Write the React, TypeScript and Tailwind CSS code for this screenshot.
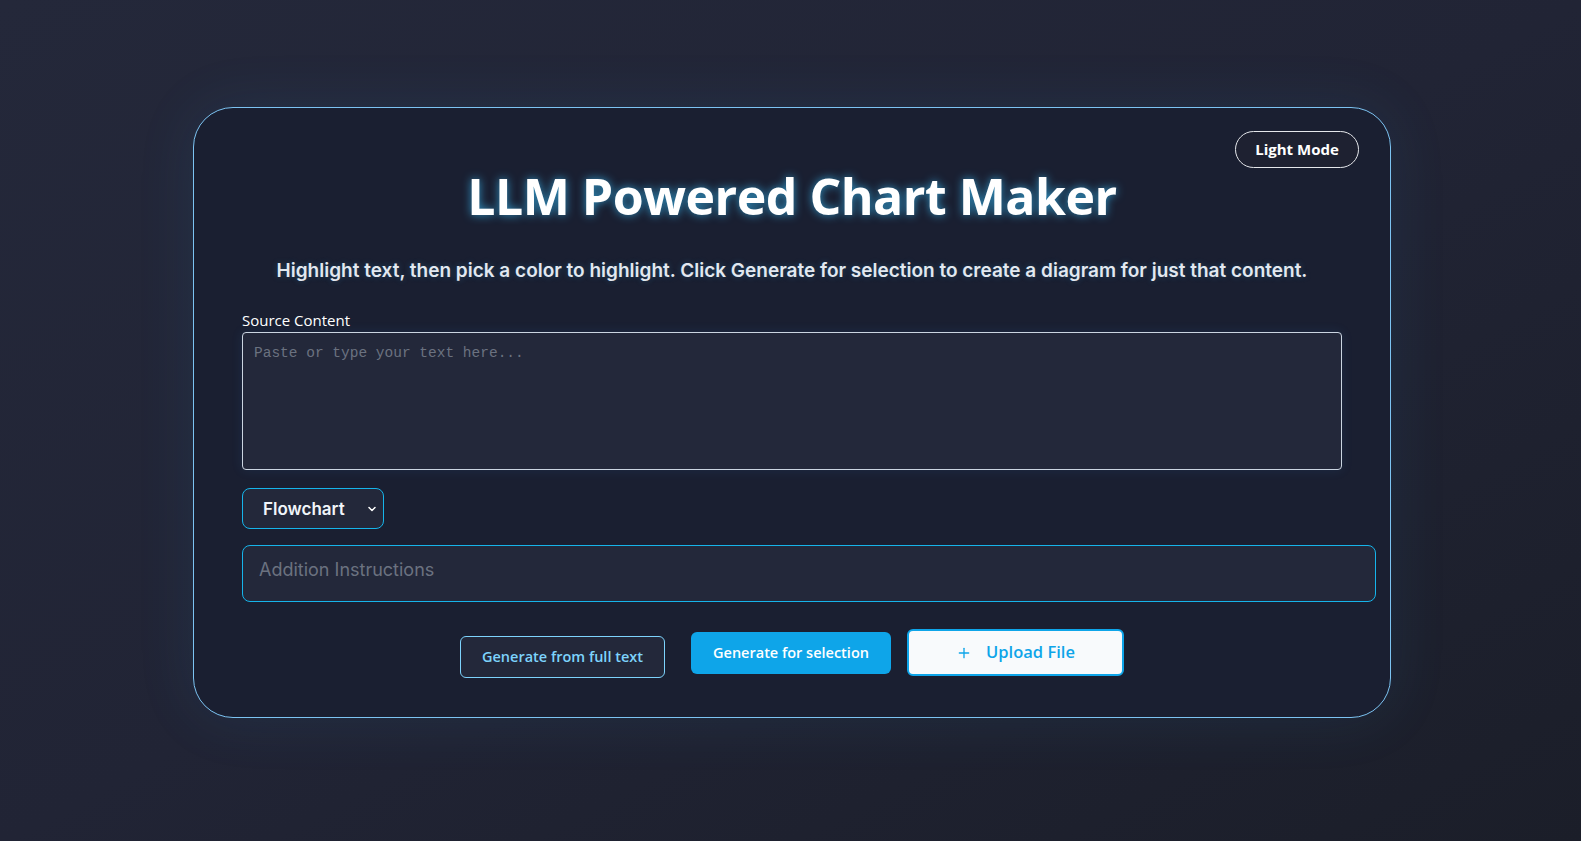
import { Plus, ChevronDown } from "lucide-react";

export default function App() {
  return (
    <main className="min-h-[841px] w-full bg-linear-to-br from-[#24283a] via-[#212435] to-[#1b1e29] pl-[3px] pt-[107px] pb-[124px]">
      {/* ================= CARD ================= */}
      <section className="relative mx-auto w-[1198px] rounded-[40px] border border-[#7cc3f2] bg-[#1a1f31] px-12 pt-[58px] pb-[41px] shadow-[0_0_60px_rgba(56,160,230,0.10)]">
        <button className="absolute right-[31px] top-[23px] flex h-[37px] w-[124px] items-center justify-center rounded-full border-[1.5px] border-[#e5e7eb] bg-[#1e2131] font-['Open_Sans',sans-serif] text-[15px] font-bold text-white">
          Light Mode
        </button>

        <h1 className="text-center font-['Open_Sans',sans-serif] text-[50px] font-bold leading-[1.2] tracking-[-0.5px] text-white [text-shadow:0_0_10px_rgba(56,189,248,0.75)]">
          LLM Powered Chart Maker
        </h1>

        <p className="mt-[31px] text-center font-['Inter',sans-serif] text-[19px] font-semibold leading-7 text-[#e2e8f0] [text-shadow:0_0_6px_rgba(56,189,248,0.25)]">
          Highlight text, then pick a color to highlight. Click Generate for selection to create a diagram for just that content.
        </p>

        {/* Source */}
        <label className="mt-[25px] block font-['Open_Sans',sans-serif] text-[15px] leading-[20px] text-white">
          Source Content
        </label>
        <textarea
          placeholder="Paste or type your text here..."
          className="mt-[2px] block h-[138px] w-[1100px] resize-none rounded-[4px] border border-[#cbd5e1] bg-[#23283a] px-[11px] pt-[10px] pb-[8px] font-['Liberation_Mono',monospace] text-[14.5px] text-white shadow-[0_0_12px_rgba(56,140,220,0.12)] outline-none placeholder:text-[#6b7280]"
        />

        {/* Chart type */}
        <div className="relative mt-[18px] w-[142px]">
          <select className="block h-[41px] w-[142px] appearance-none rounded-[8px] border border-[#16b4ea] bg-[#23283a] pl-[20px] pt-[2px] font-['Inter',sans-serif] text-[17px] font-semibold text-[#f1f5f9] outline-none">
            <option>Flowchart</option>
          </select>
          <ChevronDown
            className="pointer-events-none absolute right-[6px] top-[15px] h-[12px] w-[12px] text-white"
            strokeWidth={3}
          />
        </div>

        <input
          placeholder="Addition Instructions"
          className="mt-[16px] box-content block h-[46px] w-[1100px] rounded-[8px] border border-[#16b4ea] bg-[#23283a] px-4 pt-0 pb-[9px] font-['Inter',sans-serif] text-[18px] text-white outline-none placeholder:text-[#6b7280]"
        />

        {/* Actions */}
        <div className="mt-[27px] flex items-center justify-center">
          <button className="h-[42px] w-[205px] translate-y-[4px] rounded-[6px] border border-[#7dd3fc] bg-[#23283a] font-['Open_Sans',sans-serif] text-[14.5px] font-semibold text-[#7dd3fc]">
            Generate from full text
          </button>
          <button className="ml-[26px] h-[42px] w-[200px] rounded-[6px] bg-[#0ea5e9] font-['Open_Sans',sans-serif] text-[14.5px] font-semibold text-white">
            Generate for selection
          </button>
          <button className="ml-[16px] flex h-[47px] w-[217px] items-center justify-center gap-[14px] rounded-[6px] border-2 border-[#0ea5e9] bg-[#f8fafc] font-['Open_Sans',sans-serif] text-[16.5px] font-semibold text-[#0ea5e9]">
            <Plus className="h-[16px] w-[16px]" strokeWidth={2} />
            Upload File
          </button>
        </div>
      </section>
    </main>
  );
}
